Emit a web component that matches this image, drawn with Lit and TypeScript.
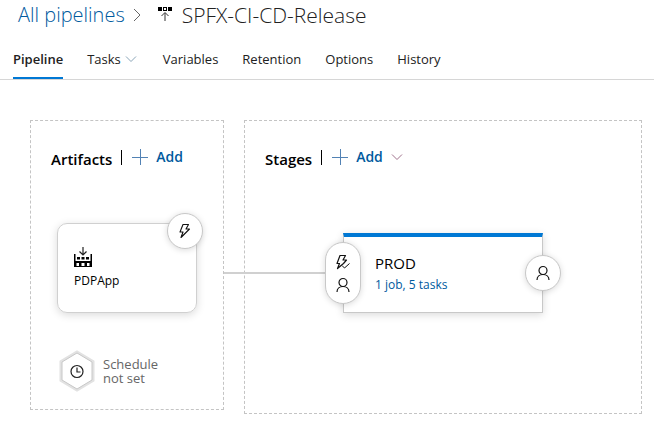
import { LitElement, html, css } from "lit";
import { customElement } from "lit/decorators.js";

const boltIcon = html`<svg class="icon" viewBox="0 0 16 16" aria-hidden="true">
  <path d="M6 1.500h5.500L9 6h3.500L4 14.500 6 9H3z" fill="none" stroke="currentColor" stroke-width="1.1" stroke-linejoin="round"/>
</svg>`;

const boltCheckIcon = html`<svg class="icon" viewBox="0 0 16 16" aria-hidden="true">
  <path d="M8.500 9.500L2.500 14.500l2-5H2L5 1.500h5.500L8 6h3.500L8.500 9.500" fill="none" stroke="currentColor" stroke-width="1.2" stroke-linejoin="round"/>
  <path d="M7 11.500l2.500 2.500 5-4.500" fill="none" stroke="currentColor"/>
</svg>`;

const personIcon = html`<svg class="icon" viewBox="0 0 16 16" aria-hidden="true">
  <circle cx="8" cy="5.500" r="4" fill="none" stroke="currentColor" stroke-width="1.200"/>
  <path d="M2 15c0-3.400 2.700-5.500 6-5.500s6 2.100 6 5.500" fill="none" stroke="currentColor" stroke-width="1.200"/>
</svg>`;

const chevronDown = html`<svg class="chevron" viewBox="0 0 12 8" aria-hidden="true">
  <path d="M1 1.500l5 5 5-5" fill="none" stroke="currentColor"/>
</svg>`;

const plusIcon = html`<svg class="plus" viewBox="0 0 16 16" aria-hidden="true">
  <path d="M8.500 0v16M0 8.500h16" fill="none" stroke="currentColor"/>
</svg>`;

@customElement("app-root")
export class AppRoot extends LitElement {
  static styles = css`
    :host {
      display: block;
      min-height: 100vh;
      background: #fff;
      color: #212121;
      font-family: "Open Sans", "Noto Sans", sans-serif;
      font-size: 13px;
      line-height: 20px;
    }
    * { box-sizing: border-box; }
    a { color: #005a9e; text-decoration: none; }
    button {
      font: inherit;
      color: inherit;
      background: none;
      border: 0;
      padding: 0;
      cursor: pointer;
    }
    h1, h2, h3 { margin: 0; font-weight: 400; }
    .icon { width: 16px; height: 16px; display: block; }
    .crumbs {
      display: flex;
      align-items: center;
      height: 30px;
      padding-left: 18px;
      font-size: 20px;
      line-height: 30px;
      font-weight: 300;
    }
    .crumbs h1 { font-size: 21px; font-weight: 300; white-space: nowrap; }
    .crumbs a { color: #005a9e; white-space: nowrap; }
    .sep { width: 8px; height: 14px; margin: 0 16px 0 8px; color: #666; }
    .release { width: 16px; height: 16px; margin-right: 9px; }
    .tabs {
      display: flex;
      gap: 24px;
      height: 50px;
      padding: 10px 12px 0 13px;
      border-bottom: 1px solid #d6d6d6;
    }
    .tab {
      display: flex;
      align-items: center;
      gap: 4px;
      white-space: nowrap;
      border-bottom: 2px solid transparent;
    }
    .tab.menu { padding-right: 2px; }
    .tab .chevron { color: #8aa5b8; }
    .tab.active { font-weight: 600; border-color: #0078d4; }
    .chevron { width: 12px; height: 8px; }
    main {
      display: flex;
      align-items: flex-start;
      gap: 20px;
      padding: 40px 12px 10px 30px;
    }
    .panel { border: 1px dashed #c4c4c4; }
    .artifacts { flex: 0 0 194px; padding-bottom: 17px; }
    .stages { flex: 1; padding-bottom: 100px; }
    .head {
      display: flex;
      align-items: center;
      height: 72px;
      padding-left: 20px;
    }
    h2 { font-size: 15px; font-weight: 600; color: #000; padding-top: 3px; }
    .bar { width: 1px; height: 15px; margin: 0 10px 0 9px; background: #000; }
    .add {
      display: flex;
      align-items: center;
      gap: 8px;
      color: #005a9e;
      font-size: 14px;
      font-weight: 600;
    }
    .plus { width: 16px; height: 16px; color: #5282b4; }
    .add .chevron { color: #a0728c; }
    .card {
      position: relative;
      width: 140px;
      height: 90px;
      margin: 30px 0 0 26px;
      padding: 22px 16px 0;
      border: 1px solid #d0d0d0;
      border-radius: 10px;
      box-shadow: 0 2px 8px rgba(0, 0, 0, 0.15);
      color: #000;
      line-height: 26px;
    }
    .card h3 { font-size: 12px; }
    .build { display: block; width: 18px; height: 22px; }
    .round {
      position: absolute;
      display: flex;
      flex-direction: column;
      align-items: center;
      justify-content: center;
      gap: 7px;
      width: 36px;
      height: 36px;
      background: #fff;
      border: 1px solid #c8c8c8;
      border-radius: 18px;
      box-shadow: 0 1px 6px rgba(0, 0, 0, 0.15);
      color: #111;
    }
    .round.trigger { top: -11px; right: -7px; }
    .round.pre { top: 5px; left: -19px; height: 62px; }
    .round.post { top: 18px; right: -19px; }
    .schedule {
      display: flex;
      align-items: center;
      gap: 8px;
      margin: 37px 0 0 28px;
      color: #666;
      line-height: 14px;
      text-align: left;
    }
    .hex { width: 36px; height: 42px; }
    .flow {
      display: flex;
      align-items: center;
      margin: 40px 0 0 -21px;
    }
    .line { width: 119px; height: 2px; background: #d0d0d0; }
    .stage {
      position: relative;
      width: 200px;
      height: 80px;
      padding: 15px 0 0 31px;
      border: 1px solid #c8c8c8;
      border-top: 4px solid #0078d4;
      box-shadow: 0 2px 8px rgba(0, 0, 0, 0.15);
      background: #fff;
    }
    .stage h3 { font-size: 15px; line-height: 22px; color: #000; }
    .stage a { font-size: 12px; line-height: 22px; display: block; }
  `;

  render() {
    return html`
      <header>
        <nav class="crumbs" aria-label="Breadcrumb">
          <a href="#">All pipelines</a>
          <svg class="sep" viewBox="0 0 8 14" aria-hidden="true">
            <path d="M1 1l6 6-6 6" fill="none" stroke="currentColor"/>
          </svg>
          <svg class="release" viewBox="0 0 16 16" aria-hidden="true">
            <path d="M1 0h4v4H1zM11 0h4v4h-4zM6 0h4v4H6z" fill="#000"/>
            <path d="M7 1h2v2H7z" fill="#fff"/>
            <path d="M8 14V6M4.500 9L8 5.500 11.500 9" fill="none" stroke="#333"/>
          </svg>
          <h1>SPFX-CI-CD-Release</h1>
        </nav>
        <nav class="tabs" aria-label="Pipeline sections">
          <button class="tab active">Pipeline</button>
          <button class="tab menu">Tasks ${chevronDown}</button>
          <button class="tab">Variables</button>
          <button class="tab">Retention</button>
          <button class="tab">Options</button>
          <button class="tab">History</button>
        </nav>
      </header>
      <main>
        <section class="panel artifacts">
          <div class="head">
            <h2>Artifacts</h2><span class="bar"></span>
            <button class="add">${plusIcon}Add</button>
          </div>
          <article class="card">
            <svg class="build" viewBox="0 0 18 22" aria-hidden="true">
              <path d="M9 1v8M5.500 5.500L9 9l3.500-3.500" fill="none" stroke="#222" stroke-width="1.200"/>
              <path d="M0 8h1.500v8H0zM16.500 8H18v8h-1.500zM0 15h18v6H0z" fill="#000"/>
              <path d="M3 11h3v2.500H3zM7.500 11h3v2.500h-3zM12 11h3v2.500h-3z" fill="#000"/>
              <path d="M2.500 17H5v3H2.500zM7.500 17h3v3h-3zM13 17h2.500v3H13z" fill="#fff"/>
            </svg>
            <h3>PDPApp</h3>
            <button class="round trigger" aria-label="Continuous deployment trigger">${boltIcon}</button>
          </article>
          <button class="schedule">
            <svg class="hex" viewBox="0 0 36 42" aria-hidden="true">
              <path d="M18 2l16 9.500v19L18 40 2 30.500v-19z" fill="#fff" stroke="#e2e2e2" stroke-width="3"/>
              <path d="M18 3l15 9v18l-15 9-15-9V12z" fill="#fff" stroke="#c8c8c8"/>
              <circle cx="18" cy="21.500" r="6" fill="none" stroke="#222" stroke-width="1.200"/>
              <path d="M18 17.500v4.500h3.500" fill="none" stroke="#222" stroke-width="1.200"/>
            </svg>
            <span>Schedule<br>not set</span>
          </button>
        </section>
        <section class="panel stages">
          <div class="head">
            <h2>Stages</h2><span class="bar"></span>
            <button class="add">${plusIcon}Add ${chevronDown}</button>
          </div>
          <div class="flow">
            <span class="line"></span>
            <article class="stage">
              <h3>PROD</h3>
              <a href="#">1 job, 5 tasks</a>
              <button class="round pre" aria-label="Pre-deployment conditions">${boltCheckIcon}${personIcon}</button>
              <button class="round post" aria-label="Post-deployment conditions">${personIcon}</button>
            </article>
          </div>
        </section>
      </main>
    `;
  }
}
